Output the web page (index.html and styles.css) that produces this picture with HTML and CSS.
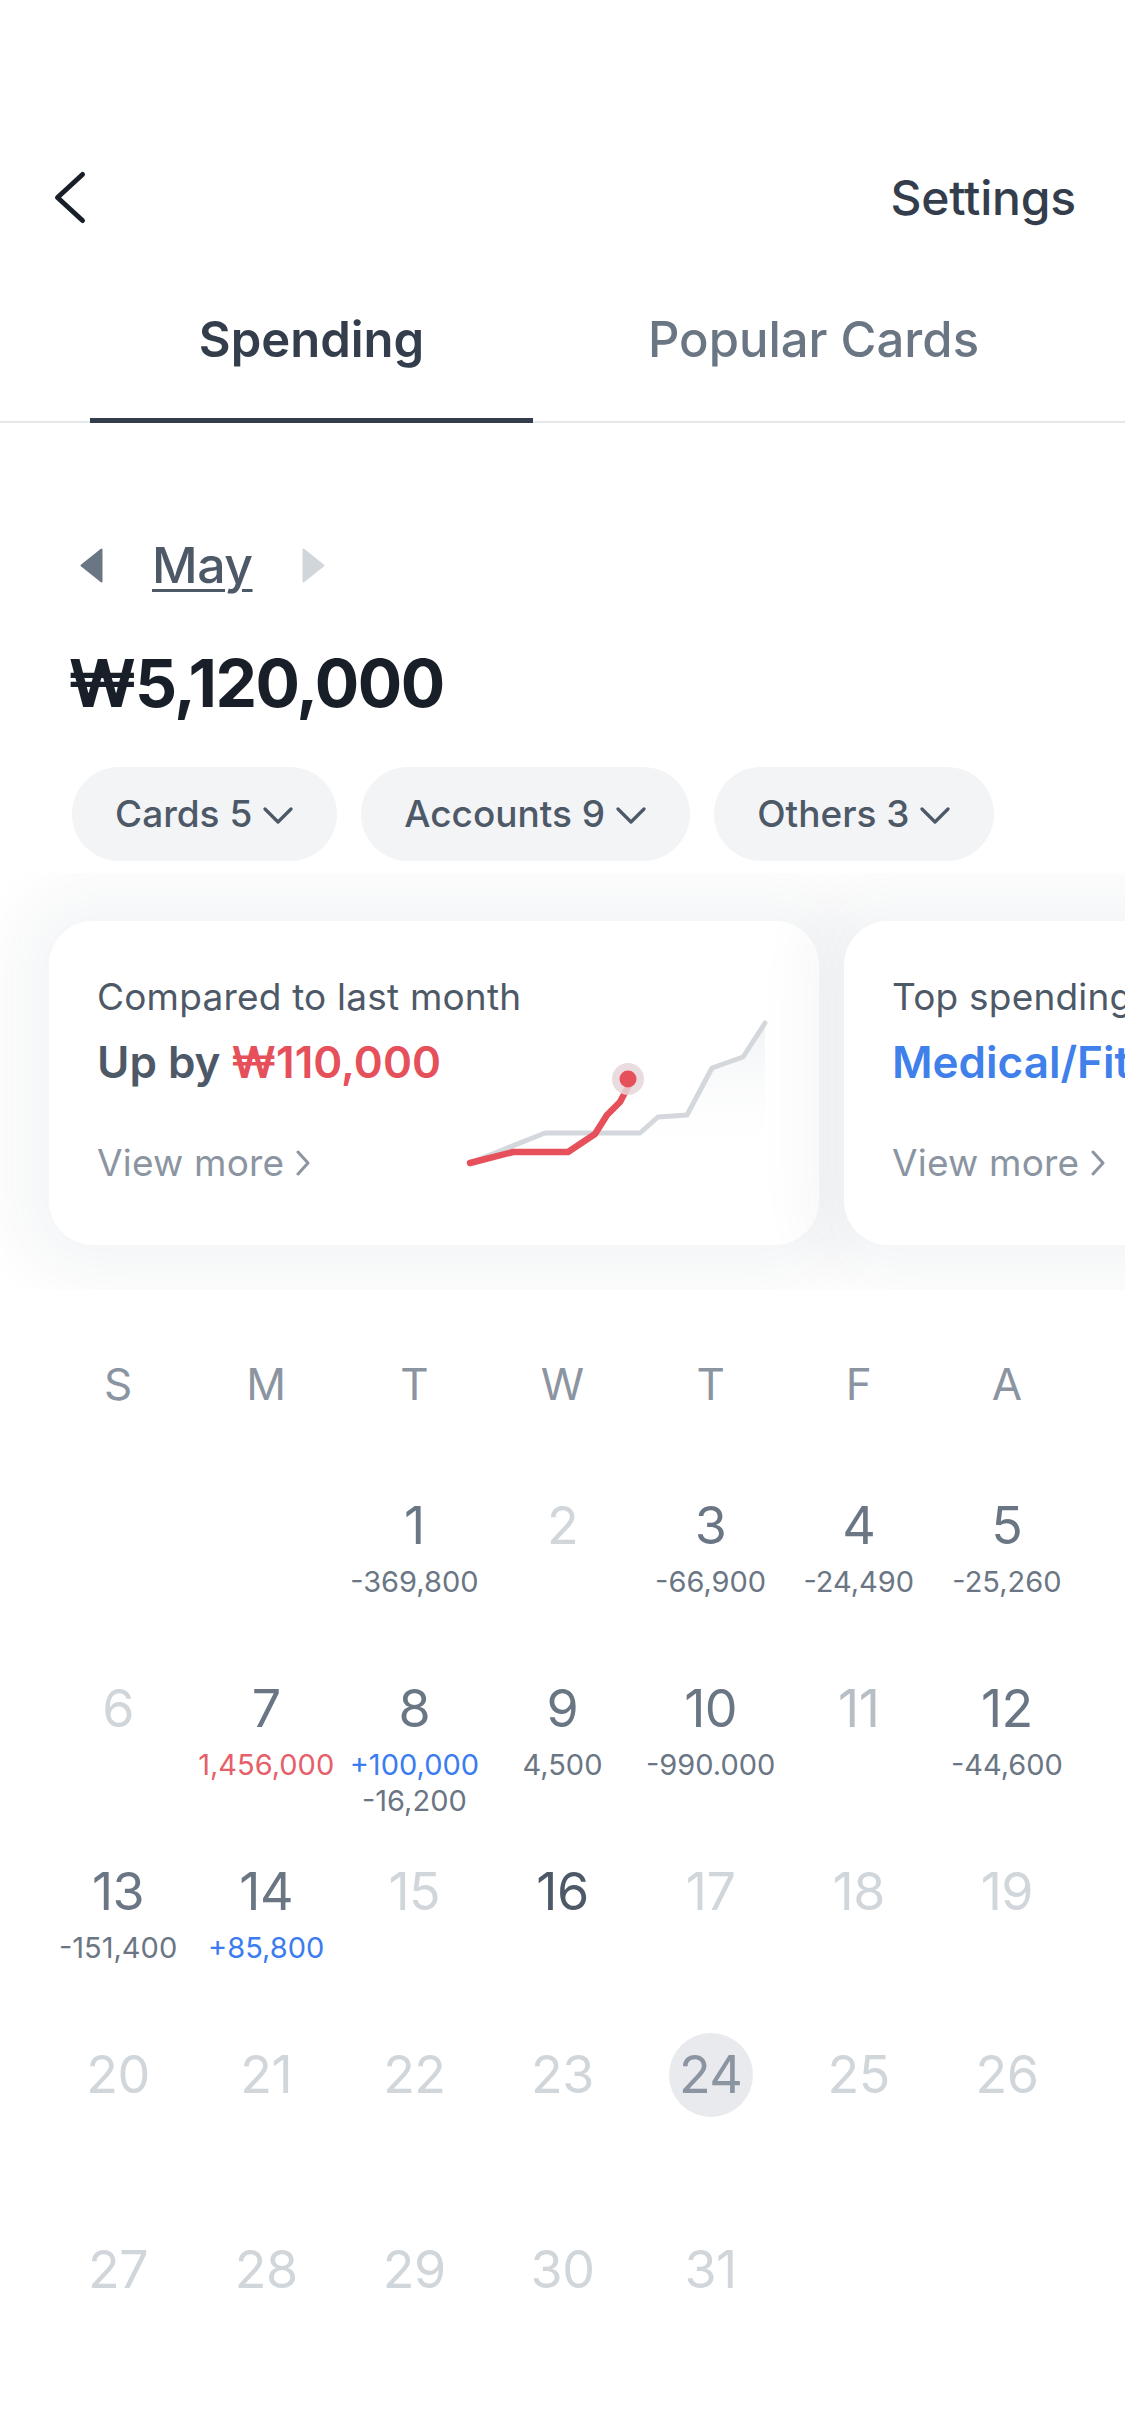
FILE: index.html
```html
<!DOCTYPE html>
<html lang="en">
<head>
<meta charset="utf-8">
<title>Spending</title>
<link rel="stylesheet" href="styles.css">
</head>
<body>
<div class="screen">
  <header class="topbar">
    <svg class="back" width="36" height="56" viewBox="0 0 36 56" aria-hidden="true"><path d="M30.5 4.5 L5.5 27.5 L30.5 50.5" fill="none" stroke="#191f28" stroke-width="5" stroke-linecap="round" stroke-linejoin="round"/></svg>
    <span class="settings">Settings</span>
  </header>

  <nav class="tabs">
    <div class="tab active">Spending</div>
    <div class="tab">Popular Cards</div>
  </nav>

  <div class="month-row">
    <svg class="tri" width="23" height="35" viewBox="0 0 23 35" aria-hidden="true"><path d="M21.5 1.5 L21.5 33.5 L1.5 17.5 Z" fill="#6b7684" stroke="#6b7684" stroke-width="2" stroke-linejoin="round"/></svg>
    <span class="month">May</span>
    <svg class="tri" width="23" height="35" viewBox="0 0 23 35" aria-hidden="true"><path d="M1.5 1.5 L1.5 33.5 L21.5 17.5 Z" fill="#d1d6db" stroke="#d1d6db" stroke-width="2" stroke-linejoin="round"/></svg>
  </div>

  <div class="total">₩5,120,000</div>

  <div class="chips">
    <div class="chip">Cards 5<svg width="30" height="17" viewBox="0 0 30 17" aria-hidden="true"><path d="M2 2 L15 15 L28 2" fill="none" stroke="#4e5968" stroke-width="3.2" stroke-linecap="round" stroke-linejoin="round"/></svg></div>
    <div class="chip">Accounts 9<svg width="30" height="17" viewBox="0 0 30 17" aria-hidden="true"><path d="M2 2 L15 15 L28 2" fill="none" stroke="#4e5968" stroke-width="3.2" stroke-linecap="round" stroke-linejoin="round"/></svg></div>
    <div class="chip">Others 3<svg width="30" height="17" viewBox="0 0 30 17" aria-hidden="true"><path d="M2 2 L15 15 L28 2" fill="none" stroke="#4e5968" stroke-width="3.2" stroke-linecap="round" stroke-linejoin="round"/></svg></div>
  </div>

  <div class="carousel">
    <div class="card">
      <p class="card-label">Compared to last month</p>
      <p class="card-value">Up by <span class="up">₩110,000</span></p>
      <p class="card-more">View more<svg width="14" height="28" viewBox="0 0 14 28" aria-hidden="true"><path d="M2 3 L12 14 L2 25" fill="none" stroke="#8b95a1" stroke-width="3" stroke-linecap="round" stroke-linejoin="round"/></svg></p>
      <svg class="chart" width="320" height="160" viewBox="0 0 320 160" aria-hidden="true">
        <defs>
          <linearGradient id="area" x1="0" y1="0" x2="0" y2="1">
            <stop offset="0" stop-color="#f1f3f5"/>
            <stop offset="1" stop-color="#ffffff" stop-opacity="0"/>
          </linearGradient>
        </defs>
        <path d="M11 147 L86 117 L181 117 L199 101 L228 99 L253 52 L284 41 L306 7 L306 150 L11 150 Z" fill="url(#area)"/>
        <path d="M11 147 L86 117 L181 117 L199 101 L228 99 L253 52 L284 41 L306 7" fill="none" stroke="#d4d8dd" stroke-width="5" stroke-linecap="round" stroke-linejoin="round"/>
        <path d="M11 147 L54 136 L109 136 L136 118 L148 99 L161 86 L169 71 L169 63" fill="none" stroke="#e5505a" stroke-width="6.5" stroke-linecap="round" stroke-linejoin="round"/>
        <circle cx="169" cy="63" r="16" fill="#e6d5d8" opacity="0.85"/>
        <circle cx="169" cy="63" r="8.5" fill="#e5505a"/>
      </svg>
    </div>
    <div class="card">
      <p class="card-label">Top spending category</p>
      <p class="card-value blue">Medical/Fitness</p>
      <p class="card-more">View more<svg width="14" height="28" viewBox="0 0 14 28" aria-hidden="true"><path d="M2 3 L12 14 L2 25" fill="none" stroke="#8b95a1" stroke-width="3" stroke-linecap="round" stroke-linejoin="round"/></svg></p>
    </div>
  </div>

  <section class="calendar">
    <div class="weekdays">
      <span>S</span><span>M</span><span>T</span><span>W</span><span>T</span><span>F</span><span>A</span>
    </div>

    <div class="week">
      <div class="day"></div>
      <div class="day"></div>
      <div class="day"><span class="num">1</span><span class="amt">-369,800</span></div>
      <div class="day"><span class="num off">2</span></div>
      <div class="day"><span class="num">3</span><span class="amt">-66,900</span></div>
      <div class="day"><span class="num">4</span><span class="amt">-24,490</span></div>
      <div class="day"><span class="num">5</span><span class="amt">-25,260</span></div>
    </div>

    <div class="week">
      <div class="day"><span class="num off">6</span></div>
      <div class="day"><span class="num">7</span><span class="amt red">1,456,000</span></div>
      <div class="day"><span class="num">8</span><span class="amt blue">+100,000</span><span class="amt">-16,200</span></div>
      <div class="day"><span class="num">9</span><span class="amt">4,500</span></div>
      <div class="day"><span class="num">10</span><span class="amt">-990.000</span></div>
      <div class="day"><span class="num mid">11</span></div>
      <div class="day"><span class="num">12</span><span class="amt">-44,600</span></div>
    </div>

    <div class="week">
      <div class="day"><span class="num">13</span><span class="amt">-151,400</span></div>
      <div class="day"><span class="num">14</span><span class="amt blue">+85,800</span></div>
      <div class="day"><span class="num off">15</span></div>
      <div class="day"><span class="num strong">16</span></div>
      <div class="day"><span class="num off">17</span></div>
      <div class="day"><span class="num off">18</span></div>
      <div class="day"><span class="num off">19</span></div>
    </div>

    <div class="week tall">
      <div class="day"><span class="num off">20</span></div>
      <div class="day"><span class="num off">21</span></div>
      <div class="day"><span class="num off">22</span></div>
      <div class="day"><span class="num off">23</span></div>
      <div class="day"><span class="num today">24</span></div>
      <div class="day"><span class="num off">25</span></div>
      <div class="day"><span class="num off">26</span></div>
    </div>

    <div class="week">
      <div class="day"><span class="num off">27</span></div>
      <div class="day"><span class="num off">28</span></div>
      <div class="day"><span class="num off">29</span></div>
      <div class="day"><span class="num off">30</span></div>
      <div class="day"><span class="num off">31</span></div>
      <div class="day"></div>
      <div class="day"></div>
    </div>
  </section>
</div>
</body>
</html>
```

FILE: styles.css
```css
* { box-sizing: border-box; }

html, body {
  margin: 0;
  padding: 0;
  background: #ffffff;
}

body {
  font-family: Inter, "Noto Sans", "Liberation Sans", sans-serif;
  color: #191f28;
  overflow-x: hidden;
}

.screen {
  width: 1125px;
  min-height: 2436px;
}

/* top bar */
.topbar {
  height: 248px;
  padding: 148px 49px 0 52px;
  display: flex;
  align-items: center;
  justify-content: space-between;
}

.back { display: block; }

.settings {
  font-size: 48px;
  line-height: 58px;
  font-weight: 500;
  color: #333d4b;
  letter-spacing: -0.2px;
}

/* tabs */
.tabs {
  display: flex;
  gap: 59px;
  padding: 0 90px;
  border-bottom: 2px solid #e5e8eb;
}

.tab {
  flex: 1;
  height: 175px;
  margin-bottom: -2px;
  padding-top: 13px;
  display: flex;
  align-items: center;
  justify-content: center;
  border-bottom: 5px solid transparent;
  font-size: 49px;
  line-height: 58px;
  font-weight: 500;
  color: #6b7684;
  letter-spacing: 0;
}

.tab.active {
  color: #333d4b;
  font-weight: 600;
  border-bottom-color: #333d4b;
}

/* month */
.month-row {
  margin-top: 112px;
  height: 60px;
  padding-left: 80px;
  display: flex;
  align-items: center;
  gap: 49px;
}

.tri { display: block; }

.month {
  font-size: 50px;
  line-height: 60px;
  font-weight: 500;
  color: #4e5968;
  text-decoration: underline;
  text-decoration-thickness: 3px;
  text-underline-offset: 6px;
  letter-spacing: -0.5px;
}

/* total */
.total {
  margin-top: 48px;
  height: 80px;
  line-height: 80px;
  padding-left: 68px;
  font-size: 66px;
  font-weight: 700;
  color: #191f28;
  letter-spacing: -1.6px;
}

/* chips */
.chips {
  margin-top: 44px;
  padding-left: 72px;
  display: flex;
  gap: 24px;
}

.chip {
  height: 94px;
  padding: 0 44px 0 43px;
  border-radius: 47px;
  background: #f2f4f6;
  display: flex;
  align-items: center;
  gap: 11px;
  font-size: 37px;
  line-height: 44px;
  font-weight: 500;
  color: #4e5968;
  letter-spacing: 0;
}

.chip svg { display: block; margin-top: 3px; }

/* carousel */
.carousel {
  margin-top: 12px;
  padding: 48px 0 45px 49px;
  display: flex;
  gap: 25px;
  overflow: hidden;
}

.card {
  flex: none;
  position: relative;
  width: 770px;
  height: 324px;
  padding: 54px 48px 0;
  border-radius: 44px;
  background: #ffffff;
  box-shadow: 0 0 60px 36px rgba(30, 45, 75, 0.045);
}

.card p { margin: 0; white-space: nowrap; }

.card-label {
  font-size: 37px;
  line-height: 44px;
  color: #4e5968;
  letter-spacing: 0.2px;
}

.card-value {
  margin-top: 18px !important;
  font-size: 44px;
  line-height: 50px;
  font-weight: 600;
  color: #4e5968;
  letter-spacing: 0;
}

.card-value .up { color: #e5505a; }
.card-value.blue { color: #3f80ea; }

.card-more {
  margin-top: 54px !important;
  display: flex;
  align-items: center;
  gap: 12px;
  font-size: 37px;
  line-height: 44px;
  color: #8b95a1;
  letter-spacing: 0.2px;
}

.card-more svg { display: block; }

.chart {
  position: absolute;
  left: 410px;
  top: 95px;
}

/* calendar */
.calendar {
  margin-top: 64px;
  padding: 0 44px;
}

.weekdays {
  display: grid;
  grid-template-columns: repeat(7, 1fr);
  height: 60px;
  font-size: 44px;
  line-height: 60px;
  color: #8b95a1;
  text-align: center;
}

.week {
  display: grid;
  grid-template-columns: repeat(7, 1fr);
  height: 183px;
}

.weekdays + .week { margin-top: 81px; }

.week.tall { height: 195px; }

.day {
  display: flex;
  flex-direction: column;
  align-items: center;
}

.num {
  font-size: 52px;
  line-height: 62px;
  color: #6b7684;
  letter-spacing: -0.5px;
}

.num.off { color: #d1d6db; }
.num.mid { color: #b8bec6; }
.num.strong { color: #4e5968; }

.num.today {
  width: 84px;
  height: 84px;
  margin: -11px 0;
  line-height: 84px;
  text-align: center;
  border-radius: 50%;
  background: #e8eaed;
  color: #8b95a1;
}

.amt {
  font-size: 29px;
  line-height: 36px;
  color: #6b7684;
  letter-spacing: 0;
  white-space: nowrap;
}

.num + .amt { margin-top: 7px; }

.amt.red { color: #e5606a; }
.amt.blue { color: #3b7cf0; }
```
